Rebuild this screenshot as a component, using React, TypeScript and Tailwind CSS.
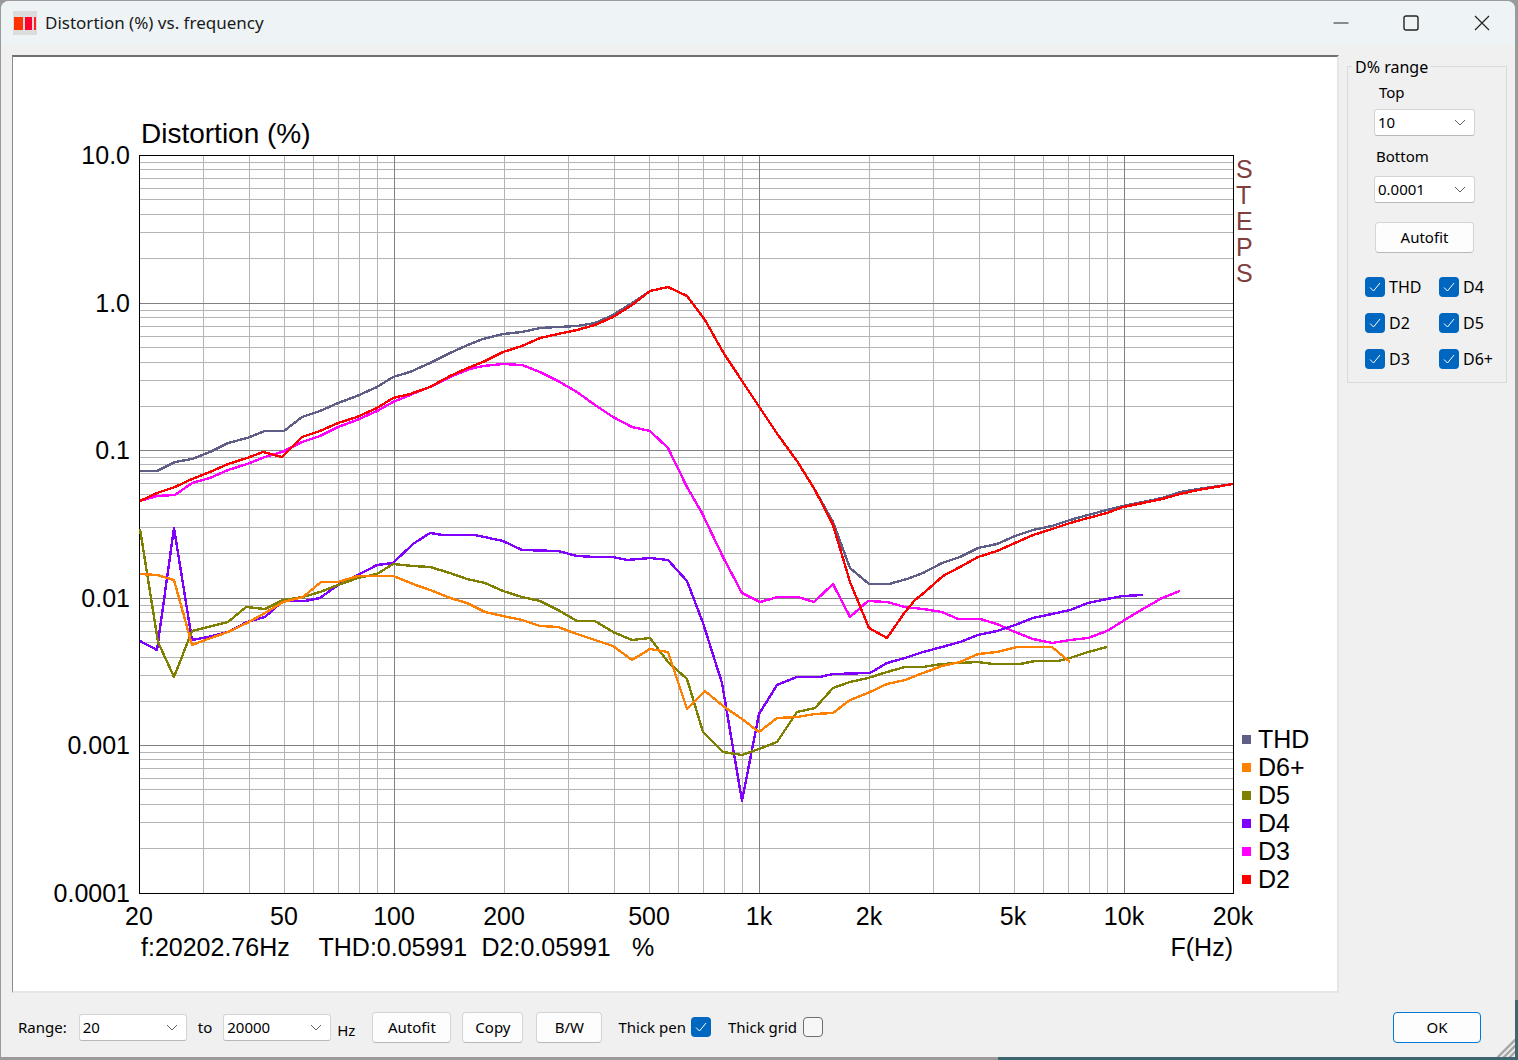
import React from 'react'

type Pt = [number, number]

const series: { name: string; color: string; pts: Pt[] }[] = [
  {
    name: 'THD',
    color: '#5e5e86',
    pts: [
      [140, 471], [157, 471], [175, 462], [192, 459], [210, 452], [228, 443], [247, 438], [265, 431], [284, 431], [302, 417],
      [320, 411], [338, 403], [357, 396], [377, 387], [393, 377], [410, 372], [430, 363], [450, 353], [470, 344], [483, 339],
      [503, 334], [522, 332], [540, 328], [558, 327], [577, 326], [595, 323], [613, 315], [632, 303], [650, 291], [668, 287],
      [687, 296], [705, 320], [723, 352], [742, 381], [760, 408], [778, 435], [797, 461], [815, 490], [833, 522], [850, 568],
      [869, 584], [889, 584], [907, 579], [923, 573], [942, 563], [960, 557], [978, 548], [997, 544], [1015, 536], [1033, 530],
      [1052, 526], [1070, 520], [1088, 515], [1107, 510], [1123, 506], [1143, 502], [1162, 498], [1180, 492], [1198, 489], [1233, 484],
    ],
  },
  {
    name: 'D3',
    color: '#ff00ff',
    pts: [
      [140, 501], [157, 496], [175, 495], [192, 483], [210, 478], [228, 470], [247, 464], [265, 457], [282, 452], [302, 442],
      [320, 436], [338, 427], [357, 420], [377, 411], [393, 402], [410, 395], [430, 387], [450, 377], [470, 369], [483, 366],
      [503, 364], [522, 365], [540, 372], [558, 381], [577, 392], [595, 405], [613, 417], [632, 427], [650, 431], [668, 448],
      [687, 487], [702, 513], [723, 557], [742, 593], [760, 602], [778, 597], [798, 597], [814, 602], [833, 584], [850, 617],
      [868, 601], [887, 602], [905, 607], [923, 609], [942, 612], [958, 619], [980, 619], [997, 624], [1015, 632], [1033, 639],
      [1052, 643], [1070, 640], [1088, 638], [1107, 631], [1123, 621], [1143, 609], [1162, 598], [1180, 591],
    ],
  },
  {
    name: 'D2',
    color: '#ff0000',
    pts: [
      [140, 501], [157, 493], [175, 487], [192, 479], [210, 472], [228, 464], [247, 458], [263, 452], [282, 457], [302, 437],
      [320, 431], [338, 423], [357, 417], [377, 408], [393, 398], [410, 394], [430, 387], [450, 376], [470, 367], [483, 362],
      [503, 352], [522, 346], [540, 338], [558, 334], [577, 330], [595, 325], [613, 317], [632, 305], [650, 291], [668, 287],
      [687, 296], [705, 320], [723, 352], [742, 381], [760, 408], [778, 435], [797, 461], [815, 490], [833, 525], [850, 582],
      [869, 628], [887, 638], [905, 612], [915, 600], [925, 592], [943, 576], [960, 567], [978, 557], [997, 551], [1015, 543],
      [1033, 535], [1052, 529], [1070, 523], [1088, 518], [1107, 513], [1123, 507], [1143, 503], [1162, 499], [1180, 494], [1198, 490],
      [1233, 484],
    ],
  },
  {
    name: 'D4',
    color: '#8000ff',
    pts: [
      [140, 641], [157, 650], [174, 528], [192, 640], [208, 637], [228, 632], [247, 622], [265, 617], [283, 601], [305, 601],
      [320, 598], [338, 585], [358, 575], [377, 565], [393, 563], [413, 544], [430, 533], [443, 535], [475, 535], [503, 541],
      [522, 550], [558, 551], [577, 556], [595, 557], [613, 557], [627, 560], [650, 558], [668, 560], [687, 581], [703, 623],
      [722, 683], [742, 801], [759, 714], [777, 685], [797, 677], [820, 677], [833, 674], [870, 673], [887, 663], [905, 658],
      [923, 652], [942, 647], [960, 642], [978, 635], [997, 631], [1015, 625], [1033, 618], [1052, 614], [1070, 610], [1088, 603],
      [1107, 599], [1123, 596], [1143, 595],
    ],
  },
  {
    name: 'D5',
    color: '#808000',
    pts: [
      [140, 529], [158, 642], [174, 677], [192, 631], [208, 627], [228, 622], [246, 607], [265, 609], [283, 600], [303, 597],
      [320, 592], [338, 585], [358, 578], [377, 574], [393, 564], [413, 566], [430, 567], [450, 573], [467, 579], [485, 583],
      [503, 591], [522, 597], [540, 601], [558, 610], [577, 621], [595, 621], [613, 632], [632, 640], [650, 638], [668, 662],
      [687, 679], [703, 732], [723, 752], [742, 755], [759, 749], [777, 742], [797, 712], [815, 708], [833, 688], [850, 682],
      [868, 678], [887, 672], [905, 667], [923, 667], [942, 664], [960, 663], [978, 662], [993, 664], [1020, 664], [1035, 661],
      [1058, 661], [1070, 658], [1088, 652], [1107, 647],
    ],
  },
  {
    name: 'D6+',
    color: '#ff8000',
    pts: [
      [140, 574], [157, 575], [174, 580], [192, 645], [208, 639], [228, 632], [247, 623], [265, 613], [283, 602], [303, 597],
      [321, 582], [338, 582], [358, 576], [393, 576], [413, 584], [430, 590], [450, 598], [467, 603], [485, 612], [503, 616],
      [522, 620], [540, 626], [558, 627], [577, 634], [595, 640], [613, 646], [632, 660], [650, 649], [668, 652], [687, 709],
      [705, 691], [723, 706], [742, 719], [759, 732], [777, 718], [797, 717], [815, 714], [833, 713], [850, 700], [868, 693],
      [887, 684], [905, 680], [923, 673], [942, 666], [960, 662], [978, 654], [997, 652], [1017, 647], [1052, 647], [1070, 662],
    ],
  },
]

const legend: [string, string][] = [
  ['THD', '#5e5e86'],
  ['D6+', '#ff8000'],
  ['D5', '#808000'],
  ['D4', '#8000ff'],
  ['D3', '#ff00ff'],
  ['D2', '#ff0000'],
]

const X0 = 139
const DECADE_X = 365
const xOf = (f: number) => Math.round(X0 + Math.log10(f / 20) * DECADE_X) + 0.5
const yTicks = [155, 303, 450, 598, 745]

const freqs: number[] = []
for (const d of [10, 100, 1000, 10000]) {
  for (let m = 1; m <= 9; m++) {
    const f = m * d
    if (f >= 30 && f <= 19000) freqs.push(f)
  }
}

const Grid = () => (
  <g shapeRendering="crispEdges" strokeWidth={1}>
    {yTicks.map((top) =>
      [2, 3, 4, 5, 6, 7, 8, 9].map((m) => {
        const y = Math.round(top + (1 - Math.log10(m)) * 147.6) + 0.5
        return <line key={`${top}-${m}`} x1={139} x2={1233} y1={y} y2={y} stroke="#b4b4b4" />
      })
    )}
    {freqs.map((f) => {
      const major = f === 100 || f === 1000 || f === 10000
      return <line key={f} x1={xOf(f)} x2={xOf(f)} y1={155} y2={893} stroke={major ? '#808080' : '#b4b4b4'} />
    })}
    {yTicks.slice(1).map((y) => (
      <line key={y} x1={139} x2={1233} y1={y + 0.5} y2={y + 0.5} stroke="#808080" />
    ))}
    <rect x={139.5} y={155.5} width={1094} height={738} fill="none" stroke="#000" />
  </g>
)

const Chart = () => (
  <svg
    className="block"
    width={1324}
    height={934}
    viewBox="13 57 1324 934"
    fontFamily="'Liberation Sans', Arial, sans-serif"
    fontSize={25}
    fill="#000"
  >
    <text x={141} y={143} fontSize={28}>Distortion (%)</text>
    {[
      ['10.0', 164],
      ['1.0', 312],
      ['0.1', 459],
      ['0.01', 607],
      ['0.001', 754],
      ['0.0001', 902],
    ].map(([t, y]) => (
      <text key={t} x={130} y={y} textAnchor="end">{t}</text>
    ))}
    <Grid />
    {series.map((s) => (
      <polyline
        key={s.name}
        points={s.pts.map((p) => p.join(',')).join(' ')}
        fill="none"
        stroke={s.color}
        strokeWidth={2.4}
        strokeLinejoin="round"
        shapeRendering="crispEdges"
      />
    ))}
    {['S', 'T', 'E', 'P', 'S'].map((c, i) => (
      <text key={i} x={1236} y={178 + i * 26} fill="#7f3f3f">{c}</text>
    ))}
    {legend.map(([name, color], i) => (
      <g key={name}>
        <rect x={1242} y={735 + i * 28} width={9} height={9} fill={color} />
        <text x={1258} y={748 + i * 28}>{name}</text>
      </g>
    ))}
    {[
      ['20', 139],
      ['50', 284],
      ['100', 394],
      ['200', 504],
      ['500', 649],
      ['1k', 759],
      ['2k', 869],
      ['5k', 1013],
      ['10k', 1124],
      ['20k', 1233],
    ].map(([t, x]) => (
      <text key={t} x={x} y={925} textAnchor="middle">{t}</text>
    ))}
    <text x={141} y={956}>f:20202.76Hz</text>
    <text x={318.5} y={956}>THD:0.05991</text>
    <text x={481.5} y={956}>D2:0.05991</text>
    <text x={632} y={956}>%</text>
    <text x={1233} y={956} textAnchor="end">F(Hz)</text>
  </svg>
)

const Chevron = () => (
  <svg width="12" height="7" viewBox="0 0 12 7" fill="none" stroke="#5f5f5f" strokeWidth="1">
    <path d="M1 1l5 5 5-5" />
  </svg>
)

const Select = ({ value, className }: { value: string; className: string }) => (
  <div className={`flex items-center justify-between h-[27px] pl-[3px] pr-[8px] bg-white border border-[#d4d4d4] border-b-[#b8b8b8] rounded-[3px] ${className}`}>
    <span>{value}</span>
    <Chevron />
  </div>
)

const Button = ({ label, className }: { label: string; className: string }) => (
  <button className={`flex items-center justify-center h-[31px] bg-[#fdfdfd] border border-[#d4d4d4] border-b-[#b8b8b8] rounded-[4px] ${className}`}>
    {label}
  </button>
)

const Check = ({ checked = true }: { checked?: boolean }) =>
  checked ? (
    <span className="flex items-center justify-center w-[20px] h-[20px] rounded-[4px] bg-[#0067c0] shrink-0">
      <svg width="12" height="10" viewBox="0 0 12 10" fill="none" stroke="#fff" strokeWidth="1">
        <path d="M1 5.5l3.5 3.5L11 1" />
      </svg>
    </span>
  ) : (
    <span className="block w-[20px] h-[20px] rounded-[4px] bg-[#f7f7f7] border border-[#6e6e6e] shrink-0" />
  )

const CheckLabel = ({ label }: { label: string }) => (
  <div className="flex items-center gap-[4px] h-[20px] text-[16px]">
    <Check />
    <span>{label}</span>
  </div>
)

export default function App() {
  return (
    <div className="relative w-[1518px] h-[1060px] bg-[#9a9a9a] overflow-hidden font-['Noto_Sans',sans-serif] text-[15px] text-black">
      <div className="flex flex-col w-[1514px] h-[1056px] ml-px mt-px rounded-t-[8px] overflow-hidden bg-[#f0f0f0]">
        <div className="flex items-center h-[44px] shrink-0 bg-[#eef4f6]">
          <div className="flex items-center gap-[2px] w-[24px] h-[24px] ml-[12px] pl-[1px] bg-[#dcdcdc]">
            <span className="block w-[9px] h-[13px] bg-[#ff3300]" />
            <span className="block w-[7px] h-[13px] bg-[#ff0033]" />
            <span className="block w-[2px] h-[13px] bg-[#ff2020]" />
          </div>
          <span className="ml-[8px] text-[17px] text-[#1a1a1a]">Distortion (%) vs. frequency</span>
          <div className="flex items-center ml-auto">
            <svg width="16" height="16" viewBox="0 0 16 16" className="mr-[54px]" fill="none" stroke="#222" strokeWidth="1.2">
              <path d="M0.5 8h15" />
            </svg>
            <svg width="16" height="16" viewBox="0 0 16 16" className="mr-[55px]" fill="none" stroke="#222" strokeWidth="1.4">
              <rect x="1" y="1" width="14" height="14" rx="2" />
            </svg>
            <svg width="16" height="16" viewBox="0 0 16 16" className="mr-[25px]" fill="none" stroke="#222" strokeWidth="1.2">
              <path d="M1 1l14 14M15 1L1 15" />
            </svg>
          </div>
        </div>

        <div className="flex flex-1 min-h-0">
          <div className="w-[1327px] h-[938px] mt-[10px] ml-[11px] bg-white border-t-2 border-l border-r-2 border-b-2 border-t-[#6f6f6f] border-l-[#8a8a8a] border-r-[#e6e6e6] border-b-[#e6e6e6] shrink-0">
            <Chart />
          </div>
          <div className="relative w-[160px] h-[317px] mt-[21px] ml-[8px] border border-[#dadada] shrink-0">
            <span className="absolute left-[4px] top-[-10px] px-[3px] bg-[#f0f0f0] leading-[20px] text-[16px]">D% range</span>
            <div className="flex flex-col pt-[15px]">
              <span className="ml-[31px] leading-[20px]">Top</span>
              <Select value="10" className="w-[101px] ml-[26px] mt-[7px]" />
              <span className="ml-[28px] mt-[10px] leading-[20px]">Bottom</span>
              <Select value="0.0001" className="w-[101px] ml-[26px] mt-[10px]" />
              <Button label="Autofit" className="w-[99px] ml-[27px] mt-[19px]" />
              <div className="grid grid-cols-[74px_1fr] gap-y-[16px] ml-[17px] mt-[24px]">
                <CheckLabel label="THD" />
                <CheckLabel label="D4" />
                <CheckLabel label="D2" />
                <CheckLabel label="D5" />
                <CheckLabel label="D3" />
                <CheckLabel label="D6+" />
              </div>
            </div>
          </div>
        </div>

        <div className="relative flex items-center h-[66px] shrink-0 pt-[6px] pl-[17px]">
          <span>Range:</span>
          <Select value="20" className="w-[108px] ml-[12px]" />
          <span className="ml-[11px]">to</span>
          <Select value="20000" className="w-[108px] ml-[11px]" />
          <span className="ml-[6px] mt-[6px]">Hz</span>
          <Button label="Autofit" className="w-[79px] ml-[17px]" />
          <Button label="Copy" className="w-[61px] ml-[11px]" />
          <Button label="B/W" className="w-[66px] ml-[13px]" />
          <span className="ml-[16px]">Thick pen</span>
          <span className="ml-[5px]"><Check /></span>
          <span className="ml-[17px]">Thick grid</span>
          <span className="ml-[6px]"><Check checked={false} /></span>
          <button className="flex items-center justify-center w-[88px] h-[31px] ml-auto mr-[34px] bg-[#fdfdfd] border border-[#0078d4] rounded-[4px]">
            OK
          </button>
          <svg className="absolute right-0 bottom-0" width="18" height="18" viewBox="0 0 18 18" stroke="#a8a8a8" strokeWidth="2.5">
            <path d="M19 0L0 19M19 6L6 19M19 12L12 19" />
          </svg>
        </div>
      </div>
      <span className="absolute right-0 bottom-0 w-[3px] h-[60px] bg-[#3f6570]" />
      <span className="absolute right-0 bottom-0 w-[520px] h-[3px] bg-[#3f6570]" />
    </div>
  )
}
